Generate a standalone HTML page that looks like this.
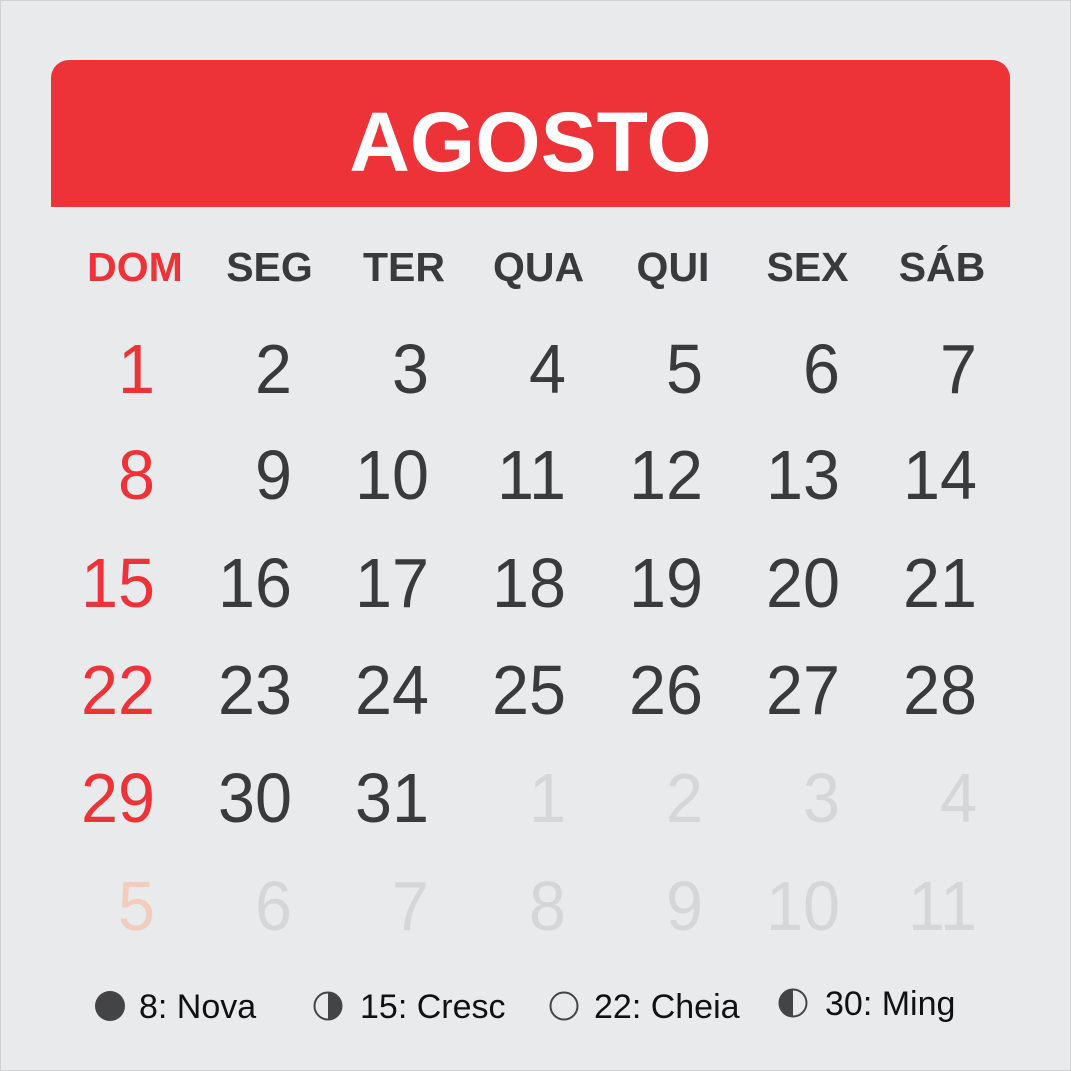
<!DOCTYPE html>
<html><head><meta charset="utf-8"><style>
body{margin:0;width:1071px;height:1071px;background:#e9eaec;position:relative;overflow:hidden;font-family:"Liberation Sans",sans-serif}
.frame{position:absolute;left:0;top:0;width:1069px;height:1069px;border:1px solid #d0d1d3}
.hdr{position:absolute;left:51px;top:60px;width:959px;height:147px;background:#ee3338;border-radius:18px 18px 0 0}
.t{position:absolute;white-space:nowrap;line-height:1}
.wd{font-weight:bold;font-size:41px;color:#3a3a3c;width:140px;text-align:center}
.n{font-size:70px;color:#3a3a3c;width:200px;text-align:right;transform:scaleX(.95);transform-origin:right}
.r{color:#ee3338}.g{color:#d5d6d8}.fr{color:#f2ccbc}
.lg{font-size:34px;color:#111}
</style></head><body>
<div class="frame"></div>
<div class="hdr"></div>
<div class="t" style="left:51px;width:959px;text-align:center;top:100px;font-size:84px;font-weight:bold;color:#fff">AGOSTO</div>
<div id="c"></div>
<svg style="position:absolute;left:0;top:0" width="1071" height="1071">
<circle cx="110" cy="1006" r="15" fill="#444"/>
<circle cx="328" cy="1006" r="13.5" fill="none" stroke="#444" stroke-width="2"/>
<path d="M328 992.5 A13.5 13.5 0 0 1 328 1019.5Z" fill="#444"/>
<circle cx="564" cy="1006" r="13.5" fill="none" stroke="#444" stroke-width="2"/>
<circle cx="793" cy="1003" r="13.5" fill="none" stroke="#444" stroke-width="2"/>
<path d="M793 989.5 A13.5 13.5 0 0 0 793 1016.5Z" fill="#444"/>
</svg>
<div class="t lg" style="left:139px;top:990px">8: Nova</div>
<div class="t lg" style="left:360px;top:990px">15: Cresc</div>
<div class="t lg" style="left:594px;top:990px">22: Cheia</div>
<div class="t lg" style="left:825px;top:987px">30: Ming</div>
<script>
var c=document.getElementById('c'),h='';
var wd=['DOM','SEG','TER','QUA','QUI','SEX','SÁB'];
for(var i=0;i<7;i++)h+='<div class="t wd'+(i==0?' r':'')+'" style="left:'+(135+134.5*i-70)+'px;top:247px">'+wd[i]+'</div>';
var rows=[[1,2,3,4,5,6,7],[8,9,10,11,12,13,14],[15,16,17,18,19,20,21],[22,23,24,25,26,27,28],[29,30,31,1,2,3,4],[5,6,7,8,9,10,11]];
var tops=[345,451,559,666,774,882];
for(var r=0;r<6;r++)for(var i=0;i<7;i++){
var cl='n';
if(r==5)cl+=i==0?' fr':' g';else if(r==4&&i>2)cl+=' g';else if(i==0)cl+=' r';
h+='<div class="t '+cl+'" style="left:'+(155+137*i-200)+'px;top:'+(tops[r]-11)+'px">'+rows[r][i]+'</div>';}
c.innerHTML=h;
</script>
</body></html>
